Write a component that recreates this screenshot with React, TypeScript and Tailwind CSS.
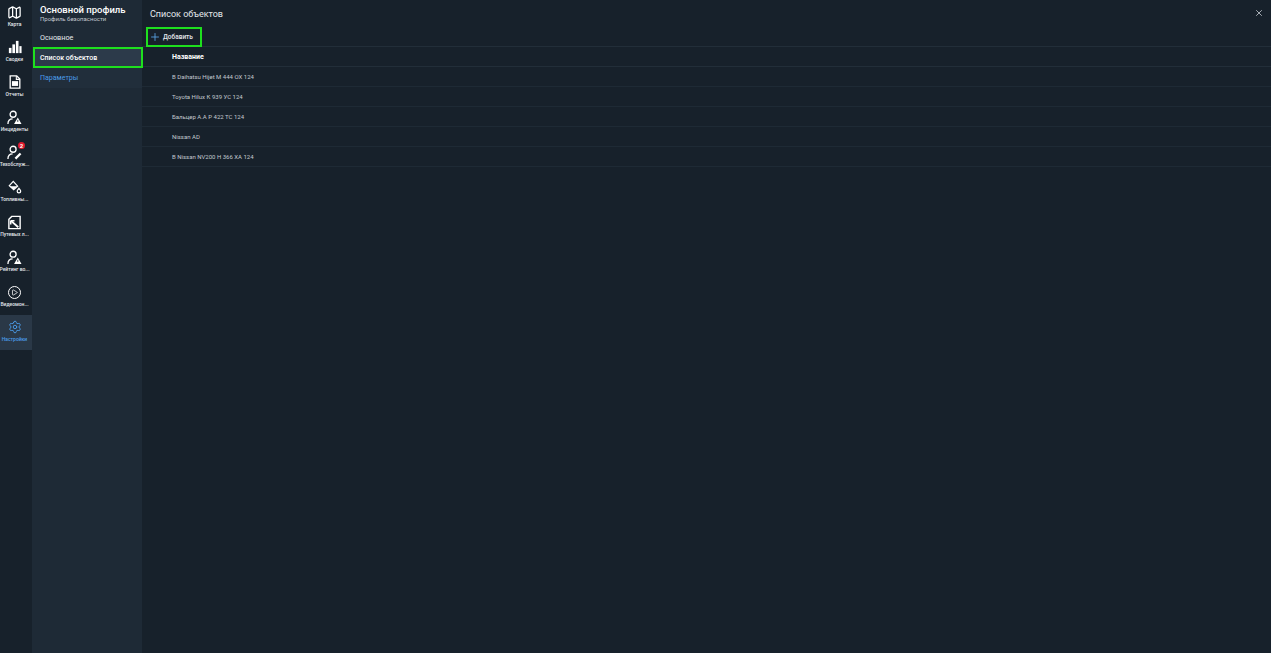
import { Map, Play, Plus, X, Settings } from 'lucide-react';
import type { ReactNode } from 'react';

const PersonWarn = ({ children }: { children?: ReactNode }) => (
  <svg viewBox="0 0 16 16" className="w-[15px] h-[15px]" fill="none" stroke="#fff" strokeWidth="1.4">
    <circle cx="6.5" cy="4.5" r="3.2" />
    <path d="M1 15c0-3.5 2-5.5 5-5.5" />
    {children}
  </svg>
);

const WarnTriangle = () => (
  <>
    <path d="M11.5 8 15.5 15h-8z" fill="#fff" stroke="none" />
    <path d="M11.5 10.5v2.2" stroke="#17212b" strokeWidth="0.9" />
  </>
);

const BarsIcon = () => (
  <svg viewBox="0 0 16 16" className="w-[14px] h-[14px]" fill="#fff">
    <rect x="1" y="9" width="3" height="6" />
    <rect x="5" y="5" width="3" height="10" />
    <rect x="9" y="1" width="3" height="14" />
    <rect x="13" y="7" width="2.5" height="8" />
  </svg>
);

const ReportIcon = () => (
  <svg viewBox="0 0 16 16" className="w-[14px] h-[14px]" fill="none" stroke="#fff" strokeWidth="1.5">
    <path d="M2.5 1h7.5l3.5 3.5V15h-11z" />
    <path d="M4.5 7h7v5.5h-7z" fill="#fff" stroke="none" />
    <path d="M9.5 1v4h4" strokeWidth="1.2" />
  </svg>
);

const FuelIcon = () => (
  <svg viewBox="0 0 16 16" className="w-[14px] h-[14px]" fill="none" stroke="#fff" strokeWidth="1.4">
    <path d="M6 1.5 11 7 6.5 11 1.5 6.5z" />
    <path d="M2 7h8.5l-4 4z" fill="#fff" stroke="none" />
    <path d="M12.5 9.5c-1 1.5-2 2.3-2 3.3a2 2 0 0 0 4 0c0-1-1-1.8-2-3.3z" />
  </svg>
);

const WaybillIcon = () => (
  <svg viewBox="0 0 16 16" className="w-[15px] h-[15px]" fill="none" stroke="#fff" strokeWidth="1.5">
    <path d="M5 1.5h9v13H2V4.5z" />
    <path d="M4 6l8 7" strokeWidth="2" />
    <path d="M4 6h4M4 6v4" strokeWidth="1.6" />
  </svg>
);

const rail = [
  { label: 'Карта', icon: <Map size={15} color="#fff" strokeWidth={2} /> },
  { label: 'Сводки', icon: <BarsIcon /> },
  { label: 'Отчеты', icon: <ReportIcon /> },
  { label: 'Инциденты', icon: <PersonWarn><WarnTriangle /></PersonWarn> },
  {
    label: 'Техобслуж...',
    badge: '2',
    icon: <PersonWarn><path d="M9 14.5 14.5 9" strokeWidth="2.4" /></PersonWarn>,
  },
  { label: 'Топливны...', icon: <FuelIcon /> },
  { label: 'Путевых л...', icon: <WaybillIcon /> },
  { label: 'Рейтинг во...', icon: <PersonWarn><WarnTriangle /></PersonWarn> },
  {
    label: 'Видеомон...',
    icon: <Play size={7} color="#fff" fill="#17212b" strokeWidth={2.6} />,
    ring: true,
  },
];

const objects = [
  'В Daihatsu Hijet М 444 ОХ 124',
  'Toyota Hilux К 939 УС 124',
  'Бальцер А.А Р 422 ТС 124',
  'Nissan AD',
  'В Nissan NV200 Н 366 ХА 124',
];

function RailItem({ label, icon, badge, ring }: { label: string; icon: ReactNode; badge?: string; ring?: boolean }) {
  return (
    <div className="h-[35px] flex flex-col items-center pt-[4px] pr-[3px]">
      <div className="relative h-[16px] flex items-center justify-center">
        {ring ? (
          <div className="w-[13px] h-[13px] rounded-full border-[1.5px] border-white flex items-center justify-center">{icon}</div>
        ) : icon}
        {badge && (
          <span className="absolute -top-[2px] -right-[3px] w-[7px] h-[7px] rounded-full bg-[#e01b2f] text-white text-[6px] leading-[7px] font-bold text-center">
            {badge}
          </span>
        )}
      </div>
      <div className="text-[5px] leading-[8px] text-[#e4e8ec] font-medium whitespace-nowrap">{label}</div>
    </div>
  );
}

export default function App() {
  return (
    <div className="h-[653px] w-[1271px] overflow-hidden flex bg-[#17212b] font-['Roboto',sans-serif]">
      <aside className="w-[32px] shrink-0 flex flex-col bg-[#17212b]">
        {rail.map((r) => (
          <RailItem key={r.label} {...r} />
        ))}
        <div className="h-[35px] flex flex-col items-center pt-[4px] pr-[3px] bg-[#2a3847]">
          <div className="h-[16px] flex items-center justify-center">
            <Settings size={14} color="#4a9be8" strokeWidth={1.6} />
          </div>
          <div className="text-[5px] leading-[8px] text-[#4a9be8] font-medium">Настройки</div>
        </div>
      </aside>

      <nav className="w-[110px] shrink-0 bg-[#1e2a36] flex flex-col">
        <div className="pl-[8px] pt-[4px] h-[27px]">
          <div className="text-[9.5px] leading-[12px] font-medium text-white whitespace-nowrap">Основной профиль</div>
          <div className="text-[6px] leading-[6px] text-[#c3c9cf] whitespace-nowrap">Профиль безопасности</div>
        </div>
        <div className="h-[20px] pl-[8px] pt-[2px] flex items-center text-[7.25px] text-[#e4e8ec]">Основное</div>
        <div className="h-[21px] ml-[1px] mr-[-1px] border-2 border-[#1ee01e] bg-[#2c3a4a] pl-[5px] pt-[1px] flex items-center text-[7px] font-medium text-white relative">
          Список объектов
        </div>
        <div className="h-[20px] pl-[8px] flex items-center text-[7px] text-[#4a9be8] bg-[#212e3b]">Параметры</div>
      </nav>

      <main className="flex-1 min-w-0 flex flex-col">
        <div className="h-[27px] flex items-center justify-between pl-[8px] pr-[7px]">
          <span className="text-[9px] pt-[2px] text-[#e4e8ec]">Список объектов</span>
          <X size={10} color="#c3c9cf" strokeWidth={2} className="-mt-[1px]" />
        </div>
        <div className="h-[20px] flex items-start pl-[4px] border-b border-[#222e39]">
          <div className="h-[20px] w-[56px] border-2 border-[#1ee01e] flex items-center pl-[1px] gap-[2px]">
            <Plus size={12} color="#5aa5e8" strokeWidth={1.7} />
            <span className="text-[6.5px] pt-[2px] font-medium text-[#e4e8ec]">Добавить</span>
          </div>
        </div>
        <div className="h-[20px] pl-[30px] pt-[2px] flex items-center text-[7px] font-bold text-white border-b border-[#222e39]">
          Название
        </div>
        {objects.map((o) => (
          <div key={o} className="h-[20px] pl-[30px] flex items-center text-[6px] text-[#c3c9cf] border-b border-[#1e2a35]">
            {o}
          </div>
        ))}
      </main>
    </div>
  );
}
